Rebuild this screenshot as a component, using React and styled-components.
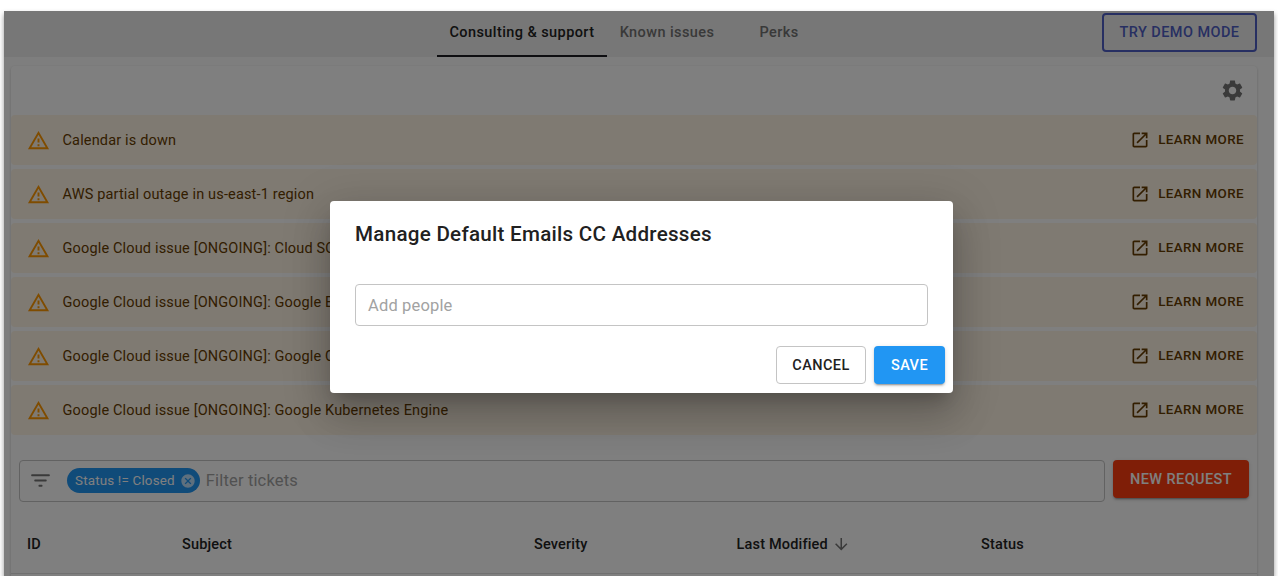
import React from "react";
import styled, { createGlobalStyle } from "styled-components";

const GlobalStyle = createGlobalStyle`
  * { box-sizing: border-box; }
  html, body { margin: 0; background: #fff; overflow: hidden; }
  body { font-family: Roboto, "Liberation Sans", sans-serif; }
`;

const PATHS = {
  warning:
    "M12 5.99L19.53 19H4.47L12 5.99M12 2L1 21h22L12 2zm1 14h-2v2h2v-2zm0-6h-2v4h2v-4z",
  open:
    "M19 19H5V5h7V3H5c-1.11 0-2 .9-2 2v14c0 1.1.89 2 2 2h14c1.1 0 2-.9 2-2v-7h-2v7zM14 3v2h3.59l-9.83 9.83 1.41 1.41L19 6.41V10h2V3h-7z",
  settings:
    "M19.14 12.94c.04-.3.06-.61.06-.94 0-.32-.02-.64-.07-.94l2.03-1.58c.18-.14.23-.41.12-.61l-1.92-3.32c-.12-.22-.37-.29-.59-.22l-2.39.96c-.5-.38-1.03-.7-1.62-.94l-.36-2.54c-.04-.24-.24-.41-.48-.41h-3.84c-.24 0-.43.17-.47.41l-.36 2.54c-.59.24-1.13.57-1.62.94l-2.39-.96c-.22-.08-.47 0-.59.22L2.74 8.87c-.12.21-.08.47.12.61l2.03 1.58c-.05.3-.09.63-.09.94s.02.64.07.94l-2.03 1.58c-.18.14-.23.41-.12.61l1.92 3.32c.12.22.37.29.59.22l2.39-.96c.5.38 1.03.7 1.62.94l.36 2.54c.05.24.24.41.48.41h3.84c.24 0 .44-.17.47-.41l.36-2.54c.59-.24 1.13-.56 1.62-.94l2.39.96c.22.08.47 0 .59-.22l1.92-3.32c.12-.22.07-.47-.12-.61l-2.01-1.58zM12 15.6c-1.98 0-3.6-1.62-3.6-3.6s1.62-3.6 3.6-3.6 3.6 1.62 3.6 3.6-1.62 3.6-3.6 3.6z",
  cancel:
    "M12 2C6.47 2 2 6.47 2 12s4.47 10 10 10 10-4.47 10-10S17.53 2 12 2zm5 13.59L15.59 17 12 13.41 8.41 17 7 15.59 10.59 12 7 8.41 8.41 7 12 10.59 15.59 7 17 8.41 13.41 12 17 15.59z",
  filter:
    "M11 18h2c.55 0 1-.45 1-1s-.45-1-1-1h-2c-.55 0-1 .45-1 1s.45 1 1 1zM3 7c0 .55.45 1 1 1h16c.55 0 1-.45 1-1s-.45-1-1-1H4c-.55 0-1 .45-1 1zm4 6h10c.55 0 1-.45 1-1s-.45-1-1-1H7c-.55 0-1 .45-1 1s.45 1 1 1z",
  down: "M20 12l-1.41-1.41L13 16.17V4h-2v12.17l-5.58-5.59L4 12l8 8 8-8z",
};

const Svg = styled.svg`
  display: block;
  flex: none;
  width: ${(p) => p.$size}px;
  height: ${(p) => p.$size}px;
  fill: ${(p) => p.$color};
`;

const Icon = ({ name, size, color }) => (
  <Svg viewBox="0 0 24 24" $size={size} $color={color}>
    <path d={PATHS[name]} />
  </Svg>
);

const Frame = styled.div`
  position: relative;
  width: 1270px;
  height: 565px;
  margin: 11px 0 0 4px;
  background: #fdfdfd;
  box-shadow: 0 3px 5px rgba(0, 0, 0, 0.42);
`;

const Page = styled.div`
  height: 565px;
  overflow: hidden;
`;

const TopBar = styled.header`
  display: grid;
  grid-template-columns: 433px 1fr auto;
  height: 46px;
  padding: 2px 17px 0 0;
  background: #efefef;
`;

const Tabs = styled.nav`
  grid-column: 2;
  display: flex;
`;

const Tab = styled.div`
  width: ${(p) => p.$width}px;
  height: 44px;
  line-height: 40px;
  text-align: center;
  font-size: 14.5px;
  font-weight: 500;
  letter-spacing: 0.42px;
  color: ${(p) => (p.$active ? "#222" : "#737373")};
  border-bottom: 2px solid ${(p) => (p.$active ? "#1c1c22" : "transparent")};
`;

const DemoButton = styled.button`
  width: 155px;
  height: 39px;
  padding: 0;
  border: 2px solid #4f5fc4;
  border-radius: 4px;
  background: transparent;
  color: #4f5fc4;
  font: 500 14.5px Roboto, sans-serif;
  letter-spacing: 0.43px;
`;

const Card = styled.main`
  margin: 9px 17px 0 7px;
  height: 520px;
  background: #fff;
  border-radius: 4px 4px 0 0;
  box-shadow: 0 1px 3px rgba(0, 0, 0, 0.2);
`;

const Toolbar = styled.div`
  display: flex;
  justify-content: flex-end;
  height: 49px;
  padding: 12px 12px 0 0;
`;

const Alerts = styled.div`
  display: flex;
  flex-direction: column;
  gap: 4px;
`;

const Alert = styled.div`
  display: flex;
  align-items: center;
  height: 50px;
  padding: 0 13px 0 16px;
  border-radius: 4px;
  background: #fff4e5;
  color: #663c00;
`;

const AlertText = styled.span`
  flex: 1;
  margin: 1px 0 0 12.5px;
  font-size: 14.5px;
  line-height: 20px;
  letter-spacing: 0.16px;
`;

const LearnMore = styled.span`
  display: flex;
  align-items: center;
  gap: 8px;
  font-size: 13.4px;
  font-weight: 500;
  line-height: 20px;
  letter-spacing: 0.4px;
`;

const LearnLabel = styled.span`
  margin-top: -1px;
`;

const FilterRow = styled.div`
  display: flex;
  align-items: flex-start;
  gap: 8px;
  padding: 25px 8px 0;
`;

const FilterBox = styled.div`
  display: flex;
  align-items: center;
  flex: 1;
  height: 42px;
  padding: 0 0 1px 8px;
  border: 1px solid #c4c4c4;
  border-radius: 4px;
`;

const Chip = styled.div`
  display: flex;
  align-items: center;
  gap: 5px;
  height: 25px;
  margin: 0 6px 0 14px;
  padding: 0 4px 0 8px;
  border-radius: 13px;
  background: #2196f3;
  color: #fff;
  font-size: 13.4px;
  letter-spacing: 0.18px;
`;

const Placeholder = styled.span`
  font-size: 16.5px;
  letter-spacing: 0.16px;
  color: #a2a2a2;
`;

const Button = styled.button`
  width: ${(p) => p.$width}px;
  height: 38px;
  padding: 0;
  border: ${(p) => (p.$outlined ? "1px solid #c4c4c4" : "0")};
  border-radius: 4px;
  background: ${(p) => p.$bg};
  color: ${(p) => p.$color};
  font: 500 14.5px Roboto, sans-serif;
  letter-spacing: 0.41px;
  box-shadow: ${(p) =>
    p.$outlined
      ? "none"
      : "0 3px 1px -2px rgba(0,0,0,.2), 0 2px 2px rgba(0,0,0,.14), 0 1px 5px rgba(0,0,0,.12)"};
`;

const TableHead = styled.div`
  display: grid;
  grid-template-columns: 155px 352px 202.5px 244.5px 1fr;
  align-items: center;
  height: 60px;
  margin-top: 12px;
  padding: 1px 0 0 16px;
  border-bottom: 1px solid #e0e0e0;
`;

const HeadCell = styled.div`
  display: flex;
  align-items: center;
  gap: 4px;
  font-size: 14.5px;
  font-weight: 500;
  letter-spacing: 0.18px;
  color: #222;
`;

const Backdrop = styled.div`
  position: absolute;
  inset: 0;
  display: flex;
  justify-content: center;
  padding: 190px 0 0 5px;
  background: rgba(0, 0, 0, 0.5);
  overflow: hidden;
`;

const Dialog = styled.section`
  width: 623px;
  height: 191.5px;
  padding: 18px 8px 0 25px;
  border-radius: 4px;
  background: #fff;
  box-shadow: 0 11px 15px -7px rgba(0, 0, 0, 0.2),
    0 24px 38px 3px rgba(0, 0, 0, 0.14), 0 9px 46px 8px rgba(0, 0, 0, 0.12);
`;

const Title = styled.h2`
  margin: 0;
  font-size: 20.6px;
  font-weight: 500;
  line-height: 30px;
  letter-spacing: 0.27px;
  color: #212121;
`;

const PeopleInput = styled.div`
  width: 573px;
  height: 42px;
  margin-top: 35px;
  padding-left: 12px;
  border: 1px solid #c4c4c4;
  border-radius: 4px;
  line-height: 41px;
`;

const Actions = styled.div`
  display: flex;
  justify-content: flex-end;
  gap: 8px;
  margin-top: 20px;
`;

const ALERTS = [
  "Calendar is down",
  "AWS partial outage in us-east-1 region",
  "Google Cloud issue [ONGOING]: Cloud SQL",
  "Google Cloud issue [ONGOING]: Google BigQuery",
  "Google Cloud issue [ONGOING]: Google Compute Engine",
  "Google Cloud issue [ONGOING]: Google Kubernetes Engine",
];

export default function App() {
  return (
    <>
      <GlobalStyle />
      <Frame>
        <Page>
          <TopBar>
            <Tabs>
              <Tab $width={170} $active>Consulting &amp; support</Tab>
              <Tab $width={120}>Known issues</Tab>
              <Tab $width={104}>Perks</Tab>
            </Tabs>
            <DemoButton>TRY DEMO MODE</DemoButton>
          </TopBar>
          <Card>
            <Toolbar>
              <Icon name="settings" size={25} color="#757575" />
            </Toolbar>
            <Alerts>
              {ALERTS.map((text) => (
                <Alert key={text}>
                  <Icon name="warning" size={23} color="#ff9800" />
                  <AlertText>{text}</AlertText>
                  <LearnMore>
                    <Icon name="open" size={20} color="#663c00" />
                    <LearnLabel>LEARN MORE</LearnLabel>
                  </LearnMore>
                </Alert>
              ))}
            </Alerts>
            <FilterRow>
              <FilterBox>
                <Icon name="filter" size={25} color="#757575" />
                <Chip>
                  Status != Closed
                  <Icon name="cancel" size={16} color="rgba(255,255,255,.7)" />
                </Chip>
                <Placeholder>Filter tickets</Placeholder>
              </FilterBox>
              <Button $width={136} $bg="#ff3d0f" $color="#fff">NEW REQUEST</Button>
            </FilterRow>
            <TableHead>
              <HeadCell>ID</HeadCell>
              <HeadCell>Subject</HeadCell>
              <HeadCell>Severity</HeadCell>
              <HeadCell>
                Last Modified
                <Icon name="down" size={18.5} color="#757575" />
              </HeadCell>
              <HeadCell>Status</HeadCell>
            </TableHead>
          </Card>
        </Page>
        <Backdrop>
          <Dialog>
            <Title>Manage Default Emails CC Addresses</Title>
            <PeopleInput>
              <Placeholder>Add people</Placeholder>
            </PeopleInput>
            <Actions>
              <Button $width={90} $bg="#fff" $color="#212121" $outlined>CANCEL</Button>
              <Button $width={71} $bg="#2196f3" $color="#fff">SAVE</Button>
            </Actions>
          </Dialog>
        </Backdrop>
      </Frame>
    </>
  );
}
